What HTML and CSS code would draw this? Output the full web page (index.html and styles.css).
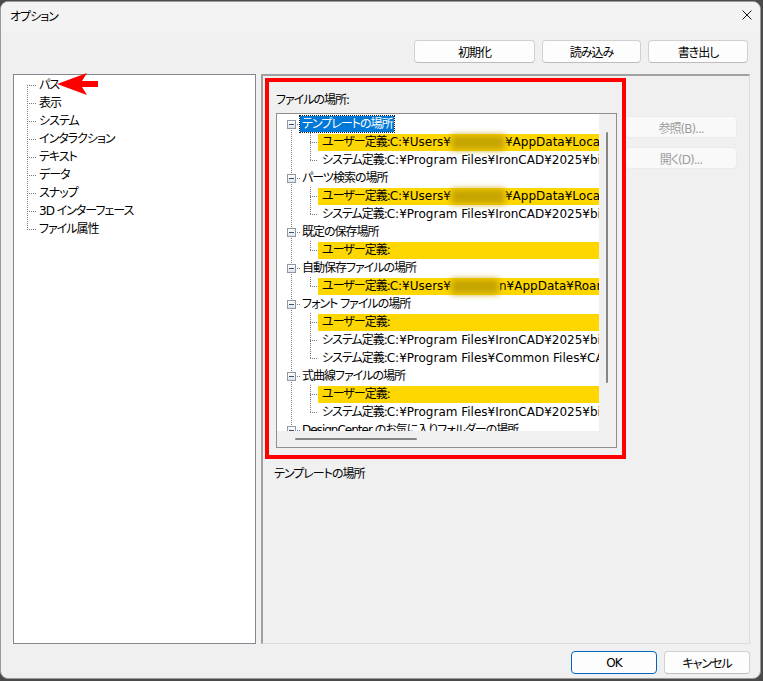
FILE: index.html
```html
<!DOCTYPE html>
<html lang="ja">
<head>
    <meta charset="UTF-8">
    <meta name="viewport" content="width=device-width, initial-scale=1.0">
    <title>オプション</title>
    <link rel="stylesheet" href="styles.css">
</head>
<body>
    <div class="window">
        <div class="titlebar">
            <span class="title">オプション</span>
            <svg class="close" width="10" height="10" viewBox="0 0 10 10">
                <path d="M0.5 0.5 L9.5 9.5 M9.5 0.5 L0.5 9.5" stroke="#1a1a1a" stroke-width="1" fill="none"/>
            </svg>
        </div>

        <div class="content">
            <div class="toolbar">
                <button class="btn w-init">初期化</button>
                <button class="btn w-load">読み込み</button>
                <button class="btn w-save">書き出し</button>
            </div>

            <div class="panes">
                <div class="nav">
                    <ul class="nav-tree">
                        <li>パス</li>
                        <li>表示</li>
                        <li>システム</li>
                        <li>インタラクション</li>
                        <li>テキスト</li>
                        <li>データ</li>
                        <li>スナップ</li>
                        <li>3D インターフェース</li>
                        <li>ファイル属性</li>
                    </ul>
                    <!-- red pointer next to the current page -->
                    <svg class="pointer" width="41" height="22" viewBox="0 0 41 22">
                        <polygon points="0,11 30,0 25,8 41,8 41,14 25,14 30,22" fill="#ff0000"/>
                    </svg>
                </div>

                <div class="page">
                    <div class="field-label">ファイルの場所:</div>

                    <div class="tree-box">
                        <div class="tree-view">
                            <ul class="paths">
                                <li>
                                    <div class="node"><span class="toggle"></span><span class="name selected">テンプレートの場所</span></div>
                                    <ul class="entries">
                                        <li><span class="entry user">ユーザー定義:<span class="path">C:¥Users¥<span class="masked"></span>¥AppData¥Local¥IronCAD¥2025¥Templates</span></span></li>
                                        <li><span class="entry">システム定義:<span class="path">C:¥Program Files¥IronCAD¥2025¥bin¥Templates</span></span></li>
                                    </ul>
                                </li>
                                <li>
                                    <div class="node"><span class="toggle"></span><span class="name">パーツ検索の場所</span></div>
                                    <ul class="entries">
                                        <li><span class="entry user">ユーザー定義:<span class="path">C:¥Users¥<span class="masked"></span>¥AppData¥Local¥IronCAD¥2025</span></span></li>
                                        <li><span class="entry">システム定義:<span class="path">C:¥Program Files¥IronCAD¥2025¥bin¥Parts</span></span></li>
                                    </ul>
                                </li>
                                <li>
                                    <div class="node"><span class="toggle"></span><span class="name">既定の保存場所</span></div>
                                    <ul class="entries">
                                        <li><span class="entry user">ユーザー定義:</span></li>
                                    </ul>
                                </li>
                                <li>
                                    <div class="node"><span class="toggle"></span><span class="name">自動保存ファイルの場所</span></div>
                                    <ul class="entries">
                                        <li><span class="entry user">ユーザー定義:<span class="path">C:¥Users¥<span class="masked short"></span>n¥AppData¥Roaming¥IronCAD</span></span></li>
                                    </ul>
                                </li>
                                <li>
                                    <div class="node"><span class="toggle"></span><span class="name">フォント ファイルの場所</span></div>
                                    <ul class="entries">
                                        <li><span class="entry user">ユーザー定義:</span></li>
                                        <li><span class="entry">システム定義:<span class="path">C:¥Program Files¥IronCAD¥2025¥bin¥Fonts</span></span></li>
                                        <li><span class="entry">システム定義:<span class="path">C:¥Program Files¥Common Files¥CAD Fonts</span></span></li>
                                    </ul>
                                </li>
                                <li>
                                    <div class="node"><span class="toggle"></span><span class="name">式曲線ファイルの場所</span></div>
                                    <ul class="entries">
                                        <li><span class="entry user">ユーザー定義:</span></li>
                                        <li><span class="entry">システム定義:<span class="path">C:¥Program Files¥IronCAD¥2025¥bin¥Curves</span></span></li>
                                    </ul>
                                </li>
                                <li>
                                    <div class="node"><span class="toggle"></span><span class="name">DesignCenter のお気に入りフォルダーの場所</span></div>
                                </li>
                            </ul>
                        </div>
                        <div class="vscroll"><div class="thumb"></div></div>
                        <div class="hscroll"><div class="thumb"></div></div>
                        <div class="corner"></div>
                    </div>

                    <div class="side-buttons">
                        <button class="btn" disabled>参照(B)...</button>
                        <button class="btn" disabled>開く(D)...</button>
                    </div>

                    <div class="description">テンプレートの場所</div>

                    <!-- highlight frame around the location list -->
                    <div class="mark"></div>
                </div>
            </div>

            <div class="actions">
                <button class="btn default">OK</button>
                <button class="btn">キャンセル</button>
            </div>
        </div>
    </div>
</body>
</html>
```

FILE: styles.css
```css
* {
    box-sizing: border-box;
}
body {
    margin: 0;
    background: #4a4a4a;
    font-family: "DejaVu Sans", "Noto Sans CJK JP", sans-serif;
    font-size: 12px;
    font-feature-settings: "palt";
    letter-spacing: -1px;
    color: #000;
}
ul {
    list-style: none;
    margin: 0;
    padding: 0;
}
.window {
    position: relative;
    width: 761px;
    height: 678px;
    margin-top: 1px;
    background: #f0f0f0;
    border: 1px solid #9a9a9a;
    border-radius: 8px;
    overflow: hidden;
    display: flex;
    flex-direction: column;
}
.titlebar {
    height: 30px;
    flex-shrink: 0;
    display: flex;
    align-items: center;
    padding: 0 8px 4px 9px;
    background: #f3f3f3;
}
.close {
    margin-left: auto;
}
.content {
    display: flex;
    flex-direction: column;
    padding: 8px 10px 0 12px;
}

/* buttons */
.btn {
    height: 23px;
    font-family: inherit;
    font-size: 12px;
    font-feature-settings: "palt";
    letter-spacing: -1px;
    color: #000;
    background: #fdfdfd;
    border: 1px solid #d0d0d0;
    border-bottom-color: #bdbdbd;
    border-radius: 4px;
    padding: 0;
}
.btn.default {
    border-color: #0067c0;
}
.btn:disabled {
    height: 22px;
    color: #9d9d9d;
    background: #f9f9f9;
    border-color: #ebebeb;
}
.toolbar {
    display: flex;
    justify-content: flex-end;
    gap: 7px;
    margin-right: 2px;
}
.w-init { width: 121px; }
.w-load { width: 99px; }
.w-save { width: 100px; }

.panes {
    display: flex;
    gap: 5px;
    height: 570px;
    margin-top: 11px;
}

/* left navigation tree */
.nav {
    position: relative;
    width: 243px;
    background: #fff;
    border: 1px solid #828790;
    padding-top: 1px;
}
.nav-tree {
    background: repeating-linear-gradient(to bottom, #7a7a7a 0 1px, transparent 1px 2px) 13px 9px / 1px calc(100% - 18px) no-repeat;
}
.nav-tree li {
    height: 18px;
    line-height: 18px;
    padding-left: 25px;
    white-space: nowrap;
    background: repeating-linear-gradient(to right, #7a7a7a 0 1px, transparent 1px 2px) 13px 9px / 9px 1px no-repeat;
}
.pointer {
    position: absolute;
    left: 43px;
    top: -2px;
}

/* right page */
.page {
    position: relative;
    flex: 1;
    border-style: solid;
    border-width: 2px 1px 1px 2px;
    border-color: #a0a0a0 #dcdcdc #dcdcdc #a0a0a0;
    padding: 15px 0 0 13px;
    display: grid;
    grid-template-columns: 341px 112px;
    column-gap: 8px;
    align-content: start;
    align-items: start;
}
.field-label {
    grid-column: 1;
    height: 18px;
    line-height: 18px;
    margin-bottom: 4px;
}
.tree-box {
    grid-column: 1;
    grid-row: 2;
    height: 335px;
    border: 1px solid #8f8f8f;
    background: #fff;
    display: grid;
    grid-template-columns: 322px 17px;
    grid-template-rows: 317px 16px;
}
.tree-view {
    overflow: hidden;
    background: #fff;
}
.vscroll,
.hscroll,
.corner {
    background: #f0f0f0;
}
.vscroll {
    padding: 18px 0 0 7px;
}
.vscroll .thumb {
    width: 2px;
    height: 251px;
    background: #858585;
    border-radius: 1px;
}
.hscroll {
    padding: 7px 0 0 18px;
}
.hscroll .thumb {
    width: 122px;
    height: 2px;
    background: #858585;
    border-radius: 1px;
}

.paths {
    padding-top: 1px;
    background: repeating-linear-gradient(to bottom, #7a7a7a 0 1px, transparent 1px 2px) 14px 10px / 1px 100% no-repeat;
}
.node {
    display: flex;
    align-items: center;
    height: 18px;
    white-space: nowrap;
    background: repeating-linear-gradient(to right, #7a7a7a 0 1px, transparent 1px 2px) 14px 9px / 9px 1px no-repeat;
}
.toggle {
    flex-shrink: 0;
    width: 9px;
    height: 9px;
    margin: 0 4px 0 10px;
    border: 1px solid #8e99a5;
    background:
        linear-gradient(#3b5474, #3b5474) center / 5px 1px no-repeat,
        linear-gradient(#ffffff, #dfe3e8);
}
.name {
    padding: 0 2px;
    line-height: 16px;
}
.name.selected {
    background: #0078d7;
    color: #fff;
    outline: 1px dotted #1a1a1a;
}
.entries li {
    display: flex;
    align-items: center;
    height: 18px;
    padding-left: 41px;
    background:
        repeating-linear-gradient(to right, #7a7a7a 0 1px, transparent 1px 2px) 33px 9px / 8px 1px no-repeat,
        repeating-linear-gradient(to bottom, #7a7a7a 0 1px, transparent 1px 2px) 33px 0 / 1px 100% no-repeat;
}
.entries li:last-child {
    background-size: 8px 1px, 1px 10px;
}
.entry {
    padding-left: 4px;
    line-height: 17px;
    white-space: nowrap;
}
.entry.user {
    flex: 1;
    background: #ffd700;
}
.path {
    letter-spacing: 0;
}
.masked {
    display: inline-block;
    width: 54px;
    height: 15px;
    vertical-align: middle;
    background: #c6a400;
    filter: blur(3px);
}
.masked.short {
    width: 48px;
}

.side-buttons {
    grid-column: 2;
    grid-row: 2;
    display: flex;
    flex-direction: column;
    gap: 9px;
    margin-top: 3px;
}
.description {
    grid-column: 1;
    grid-row: 3;
    height: 18px;
    line-height: 18px;
    margin: 17px 0 0 -2px;
}
.mark {
    position: absolute;
    left: 2px;
    top: 2px;
    width: 361px;
    height: 381px;
    border: 4px solid #ff0000;
}

.actions {
    display: flex;
    justify-content: flex-end;
    gap: 7px;
    margin-top: 7px;
}
.actions .btn {
    width: 86px;
}
```
